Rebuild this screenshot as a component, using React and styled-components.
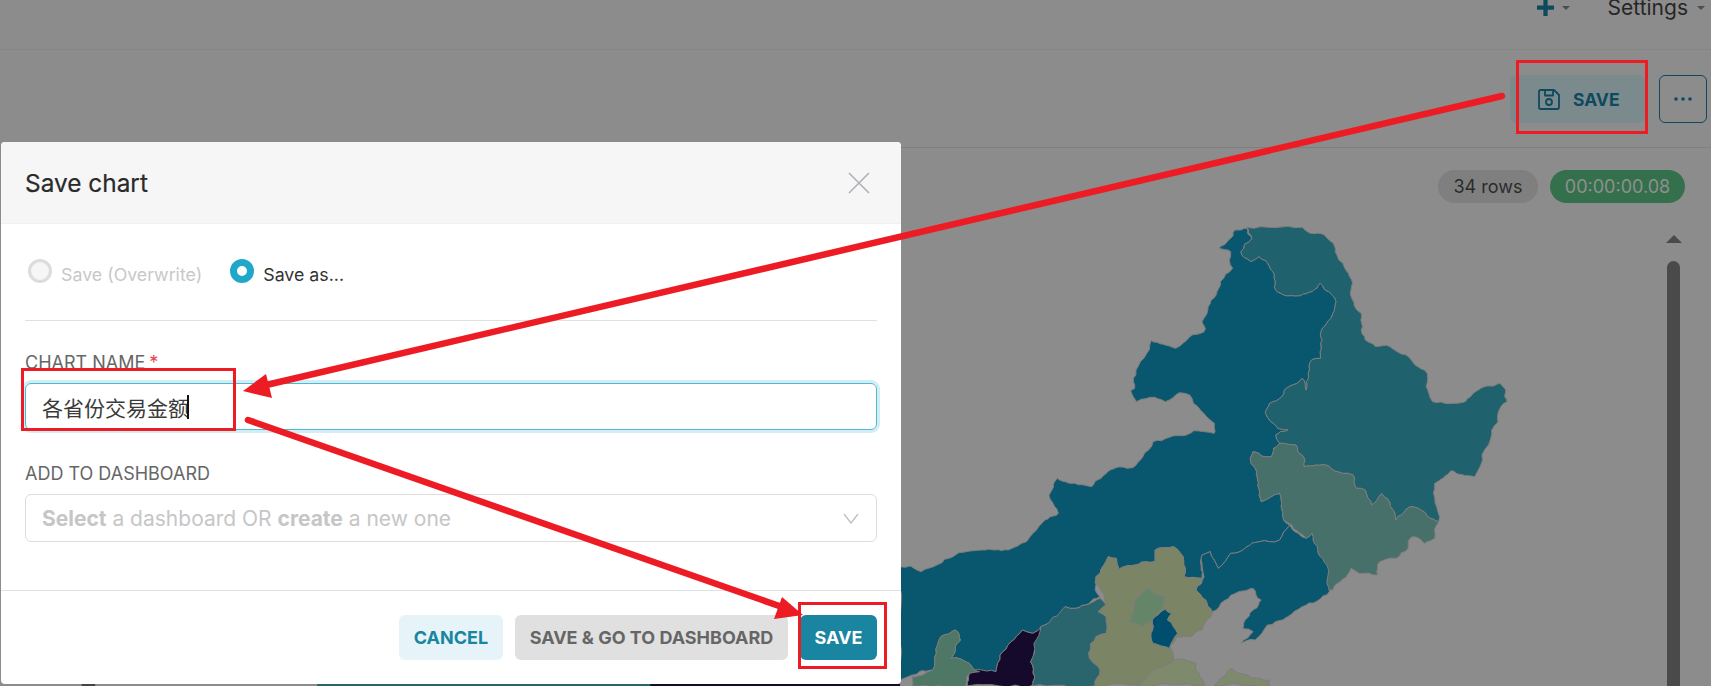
import React from "react";
import styled, { createGlobalStyle } from "styled-components";

const Global = createGlobalStyle`
  html, body { margin: 0; padding: 0; background: #8c8c8c; }
  * { box-sizing: border-box; }
`;

const Page = styled.div`
  position: relative;
  width: 1711px;
  height: 686px;
  overflow: hidden;
  background: #8c8c8c;
  font-family: Inter, "Noto Sans CJK SC", sans-serif;
`;

const TopNav = styled.header`
  height: 50px;
  border-bottom: 1px solid #858585;
  display: flex;
  justify-content: flex-end;
  align-items: flex-start;
  padding-right: 6px;
`;
const NavItem = styled.div`
  display: flex;
  align-items: flex-start;
  margin-left: ${p => p.$gap || 0}px;
  font-size: 21px;
  line-height: 24px;
  margin-top: -4px;
  color: #262626;
`;
const Caret = styled.span`
  width: 0;
  height: 0;
  margin: 10px 0 0 ${p => p.$gap}px;
  border-left: 4px solid transparent;
  border-right: 4px solid transparent;
  border-top: 4px solid #4d4d4d;
`;
const PlusIcon = styled.svg`
  width: 17px;
  height: 17px;
  margin-top: 3px;
`;

const Toolbar = styled.div`
  height: 98px;
  border-bottom: 1px solid #7f7f7f;
  display: flex;
  justify-content: flex-end;
  align-items: flex-start;
  gap: 14px;
  padding: 25px 4px 0 0;
`;
const ToolSave = styled.div`
  width: 135px;
  height: 48px;
  border-radius: 6px;
  background: #7b8b8d;
  color: #0f495e;
  display: flex;
  align-items: center;
  padding-left: 28px;
  gap: 13px;
  font-size: 17.5px;
  font-weight: 700;
`;
const MoreButton = styled.div`
  width: 48px;
  height: 48px;
  border: 1px solid #0f495e;
  border-radius: 6px;
  display: flex;
  align-items: center;
  justify-content: center;
`;

const ChartArea = styled.main`
  height: 538px;
  padding-top: 22px;
`;
const StatusRow = styled.div`
  display: flex;
  justify-content: flex-end;
  gap: 12px;
  padding-right: 26px;
`;
const Pill = styled.div`
  height: 33px;
  width: ${p => p.$w}px;
  border-radius: 17px;
  background: ${p => p.$bg};
  color: ${p => p.$fg};
  font-size: 18px;
  display: flex;
  align-items: center;
  justify-content: center;
`;
const ChartBody = styled.div`
  display: flex;
  align-items: flex-start;
  padding-left: 900px;
  margin-top: -3px;
`;
const MapSvg = styled.svg`
  width: 640px;
  height: 486px;
  flex: none;
  overflow: visible;
`;
const Scrollbar = styled.div`
  margin: 35px 0 0 126px;
  width: 15px;
  display: flex;
  flex-direction: column;
  align-items: center;
`;
const ScrollArrow = styled.span`
  width: 0;
  height: 0;
  border-left: 8px solid transparent;
  border-right: 8px solid transparent;
  border-bottom: 8px solid #4a4a4a;
`;
const ScrollThumb = styled.span`
  width: 13px;
  height: 460px;
  margin-top: 18px;
  border-radius: 7px;
  background: #4a4a4a;
`;

const Modal = styled.section`
  position: absolute;
  left: 1px;
  top: 142px;
  width: 900px;
  height: 542px;
  background: #fff;
  border-radius: 4px;
  display: flex;
  flex-direction: column;
  overflow: hidden;
`;
const ModalHeader = styled.div`
  height: 82px;
  flex: none;
  background: #f6f6f6;
  border-bottom: 1px solid #f0f0f0;
  display: flex;
  align-items: center;
  justify-content: space-between;
  padding: 0 31px 0 24px;
`;
const ModalTitle = styled.h2`
  margin: 0;
  font-size: 24.4px;
  font-weight: 400;
  color: #2a2a2a;
  -webkit-text-stroke: 0.2px #2a2a2a;
`;
const ModalBody = styled.div`
  flex: 1;
  padding: 35px 24px 0;
`;
const RadioRow = styled.div`
  display: flex;
  align-items: center;
  height: 24px;
`;
const RadioCircle = styled.span`
  width: 24px;
  height: 24px;
  border-radius: 50%;
  flex: none;
  margin-left: ${p => p.$left || 0}px;
  background: ${p => (p.$on ? "#fff" : "#f6f6f6")};
  border: ${p => (p.$on ? "7px solid #20a7c9" : "3px solid #dcdcdc")};
`;
const RadioLabel = styled.span`
  margin: 7px ${p => p.$after || 0}px 0 ${p => p.$gap}px;
  font-size: 17.8px;
  color: ${p => (p.$off ? "#c8c8c8" : "#333")};
`;
const Divider = styled.hr`
  margin: 37px 0 0;
  border: 0;
  height: 1px;
  background: #e0e0e0;
`;
const FieldLabel = styled.div`
  margin-top: ${p => p.$top}px;
  height: 20px;
  line-height: 20px;
  font-size: 18px;
  color: #666;
`;
const Required = styled.span`
  margin-left: 4px;
  color: #e04355;
`;
const NameInput = styled.div`
  margin-top: 10px;
  height: 47px;
  border: 1px solid #4fb8d2;
  border-radius: 6px;
  box-shadow: 0 0 0 3px #d2edf4;
  padding-left: 16px;
  display: flex;
  align-items: center;
  font-size: 21px;
  color: #3a3a3a;
  font-family: "Noto Sans CJK SC", sans-serif;
`;
const TextCaret = styled.span`
  width: 2px;
  height: 24px;
  margin-left: -2px;
  background: #111;
`;
const SelectBox = styled.div`
  margin-top: 10px;
  height: 48px;
  border: 1px solid #dcdcdc;
  border-radius: 6px;
  padding: 0 17px 0 16px;
  display: flex;
  align-items: center;
  justify-content: space-between;
  font-size: 21px;
  color: #c6c6c6;
  b { font-weight: 700; }
`;
const ModalFooter = styled.div`
  height: 94px;
  flex: none;
  border-top: 1px solid #e0e0e0;
  padding: 24px 24px 0 0;
  display: flex;
  justify-content: flex-end;
  gap: 12px;
`;
const Button = styled.div`
  width: ${p => p.$w}px;
  height: 45px;
  border-radius: 6px;
  background: ${p => p.$bg};
  color: ${p => p.$fg};
  font-size: 18px;
  font-weight: 700;
  display: flex;
  align-items: center;
  justify-content: center;
`;

const AnnotationBox = styled.div`
  position: absolute;
  left: ${p => p.$x}px;
  top: ${p => p.$y}px;
  width: ${p => p.$w}px;
  height: ${p => p.$h}px;
  border: 3px solid #ed1c24;
`;
const ArrowLayer = styled.svg`
  position: absolute;
  left: 0;
  top: 0;
  width: 1711px;
  height: 686px;
  pointer-events: none;
`;

const regions = [
  { fill: "#1f616c", d: "850,82 985,82 1005,100 1040,105 1065,140 1085,190 1105,270 1130,340 1140,420 1165,440 1200,440 1240,465 1285,510 1305,605 1385,605 1410,575 1470,550 1487,605 1465,640 1450,700 1408,830 1350,812 1310,850 1320,965 1270,925 1250,920 1215,960 1180,880 1155,915 1140,870 1118,865 1110,825 1085,820 1050,798 990,800 970,735 930,730 920,705 950,690 925,685 895,640 905,610 935,590 985,535 995,570 1000,520 1010,478 1030,475 1030,400 1060,340 1068,305 1030,250 1010,275 950,288 920,270 905,200 880,170 860,185 835,155 862,115" },
  { fill: "#09566f", d: "850,85 820,90 782,145 810,155 815,205 785,245 755,320 740,365 745,395 710,410 675,445 615,422 578,525 575,565 565,572 580,605 625,592 650,605 685,578 710,585 770,670 770,700 720,692 660,712 620,725 595,770 570,803 515,810 470,860 415,850 385,835 365,885 388,940 340,980 310,1025 265,1050 200,1050 130,1070 52,1115 25,1098 0,1100 0,1440 20,1430 80,1410 100,1310 135,1290 148,1320 125,1375 170,1390 195,1415 235,1415 245,1365 300,1290 325,1300 345,1280 360,1272 385,1270 405,1220 430,1225 490,1190 480,1130 510,1070 530,1075 535,1110 600,1085 625,1085 625,1050 670,1040 695,1080 695,1130 740,1135 740,1065 760,1055 780,1105 810,1060 850,1040 880,1025 930,1020 955,975 940,960 930,880 885,905 875,830 858,775 865,755 890,770 910,770 915,745 930,730 920,705 950,690 925,685 895,640 905,610 935,590 985,535 995,570 1000,520 1010,478 1030,475 1030,400 1060,340 1068,305 1030,250 1010,275 950,288 920,270 905,200 880,170 860,185 835,155 862,115" },
  { fill: "#47706a", d: "858,775 865,755 890,770 910,770 930,730 970,735 990,800 1050,798 1085,820 1110,825 1118,865 1140,870 1155,915 1180,880 1215,960 1250,920 1270,925 1320,965 1310,1015 1285,1030 1255,1010 1245,1045 1215,1075 1175,1085 1170,1125 1125,1120 1105,1105 1060,1170 1050,1170 1035,1075 1010,1000 995,1015 960,975 940,960 930,880 885,905 875,830" },
  { fill: "#09566f", d: "955,975 995,1015 1010,1000 1035,1075 1052,1175 985,1220 950,1250 900,1275 870,1320 835,1330 865,1295 840,1285 850,1255 885,1200 865,1165 830,1175 765,1235 725,1170 745,1130 740,1065 760,1055 780,1105 810,1060 850,1040 880,1025 930,1020" },
  { fill: "#7b8464", d: "510,1070 530,1075 535,1110 600,1085 625,1085 625,1050 670,1040 695,1080 695,1130 740,1135 725,1170 765,1235 740,1290 710,1310 680,1310 660,1340 670,1380 620,1410 585,1458 478,1458 490,1410 462,1360 480,1310 505,1300 505,1250 485,1235 505,1215 480,1130" },
  { fill: "#648567", d: "610,1165 650,1190 630,1240 620,1260 595,1280 560,1265 575,1205" },
  { fill: "#004e6d", d: "650,1228 665,1240 655,1260 680,1300 660,1345 620,1330 625,1250" },
  { fill: "#15092c", d: "345,1280 350,1300 320,1385 330,1430 322,1458 165,1458 170,1420 190,1408 235,1415 245,1365 300,1290 325,1300" },
  { fill: "#4f7766", d: "100,1310 135,1290 148,1320 125,1375 170,1390 195,1415 170,1420 160,1458 30,1458 30,1430 80,1410" },
  { fill: "#2a656e", d: "360,1272 405,1220 430,1225 490,1195 505,1215 485,1235 505,1250 505,1300 480,1310 462,1360 490,1410 478,1458 322,1458 330,1430 320,1385 345,1280" },
  { fill: "#7f8a6c", d: "620,1410 670,1380 725,1390 735,1430 745,1458 585,1458" },
  { fill: "#7f8a6c", d: "770,1458 810,1405 880,1435 905,1440 905,1458" },
];

// Roughens coastline/border edges: the offset depends only on the edge's two ends,
// so a border shared by two regions stays shared.
const hash = (a, b) => {
  const s = [a.join(), b.join()].sort().join("|");
  let h = 7;
  for (let i = 0; i < s.length; i++) h = (h * 31 + s.charCodeAt(i)) % 9973;
  return h / 9973 - 0.5;
};
const roughEdge = (a, b, depth) => {
  const len = Math.hypot(b[0] - a[0], b[1] - a[1]);
  if (depth === 0 || len < 14) return [];
  const off = hash(a, b) * Math.min(len * 0.28, 13);
  const m = [
    Math.round((a[0] + b[0]) / 2 - ((b[1] - a[1]) / len) * off * Math.sign(b[0] - a[0] || 1)),
    Math.round((a[1] + b[1]) / 2 + ((b[0] - a[0]) / len) * off * Math.sign(b[0] - a[0] || 1)),
  ];
  return [...roughEdge(a, m, depth - 1), m, ...roughEdge(m, b, depth - 1)];
};
const roughen = d => {
  const pts = d.split(" ").map(p => p.split(",").map(Number));
  const out = [];
  pts.forEach((p, i) => {
    out.push(p, ...roughEdge(p, pts[(i + 1) % pts.length], 3));
  });
  return out.map(p => p.join(",")).join(" ");
};

const ChinaMap = () => (
  <MapSvg viewBox="0 0 1568 1458" preserveAspectRatio="none">
    <rect x="-2005" y="1452" width="33" height="6" fill="#444" />
    <rect x="-1428" y="1452" width="816" height="6" fill="#2a656e" />
    <rect x="-612" y="1452" width="612" height="6" fill="#15092c" />
    {regions.map((r, i) => (
      <polygon key={i} points={roughen(r.d)} fill={r.fill} stroke="#7d7d7d" strokeWidth="1" vectorEffect="non-scaling-stroke" strokeLinejoin="round" />
    ))}
  </MapSvg>
);

const FloppyIcon = () => (
  <svg width="22" height="21" viewBox="0 0 22 21" fill="none" stroke="#0f495e" strokeWidth="1.8" strokeLinejoin="round">
    <path d="M2.5 1H16l5 5v12.5a1.5 1.5 0 0 1-1.5 1.5h-17A1.5 1.5 0 0 1 1 18.5v-16A1.5 1.5 0 0 1 2.5 1z" />
    <path d="M7 1v5.5h8V1" />
    <circle cx="11" cy="13" r="3" />
  </svg>
);

export default function App() {
  return (
    <Page>
      <Global />
      <TopNav>
        <NavItem>
          <PlusIcon viewBox="0 0 16 16"><path d="M6 0h4v6h6v4h-6v6H6v-6H0V6h6z" fill="#0f495e" /></PlusIcon>
          <Caret $gap={8} />
        </NavItem>
        <NavItem $gap={38}>
          Settings
          <Caret $gap={9} />
        </NavItem>
      </TopNav>
      <Toolbar>
        <ToolSave><FloppyIcon />SAVE</ToolSave>
        <MoreButton>
          <svg width="18" height="4" viewBox="0 0 18 4" fill="#0f495e">
            <circle cx="2" cy="2" r="1.8" /><circle cx="9" cy="2" r="1.8" /><circle cx="16" cy="2" r="1.8" />
          </svg>
        </MoreButton>
      </Toolbar>
      <ChartArea>
        <StatusRow>
          <Pill $w={100} $bg="#7f7f7f" $fg="#2b2b2b">34 rows</Pill>
          <Pill $w={135} $bg="#35704d" $fg="#8f8f8f">00:00:00.08</Pill>
        </StatusRow>
        <ChartBody>
          <ChinaMap />
          <Scrollbar>
            <ScrollArrow />
            <ScrollThumb />
          </Scrollbar>
        </ChartBody>
      </ChartArea>

      <Modal>
        <ModalHeader>
          <ModalTitle>Save chart</ModalTitle>
          <svg width="22" height="22" viewBox="0 0 22 22" stroke="#b0b0bc" strokeWidth="1.6">
            <path d="M1 1l20 20M21 1L1 21" />
          </svg>
        </ModalHeader>
        <ModalBody>
          <RadioRow>
            <RadioCircle $left={3} />
            <RadioLabel $off $gap={9} $after={28}>Save (Overwrite)</RadioLabel>
            <RadioCircle $on />
            <RadioLabel $gap={9}>Save as...</RadioLabel>
          </RadioRow>
          <Divider />
          <FieldLabel $top={32}>CHART NAME<Required>*</Required></FieldLabel>
          <NameInput>各省份交易金额<TextCaret /></NameInput>
          <FieldLabel $top={34}>ADD TO DASHBOARD</FieldLabel>
          <SelectBox>
            <span><b>Select</b> a dashboard OR <b>create</b> a new one</span>
            <svg width="16" height="11" viewBox="0 0 16 11" fill="none" stroke="#c2c2c2" strokeWidth="1.4"><path d="M1 1l7 9 7-9" /></svg>
          </SelectBox>
        </ModalBody>
        <ModalFooter>
          <Button $w={104} $bg="#e6f4f9" $fg="#1a85a0">CANCEL</Button>
          <Button $w={273} $bg="#e0e0e0" $fg="#666">SAVE &amp; GO TO DASHBOARD</Button>
          <Button $w={77} $bg="#1a85a0" $fg="#fff">SAVE</Button>
        </ModalFooter>
      </Modal>

      <AnnotationBox $x={1516} $y={60} $w={132} $h={74} />
      <AnnotationBox $x={21} $y={368} $w={215} $h={63} />
      <AnnotationBox $x={798} $y={602} $w={89} $h={67} />
      <ArrowLayer viewBox="0 0 1711 686">
        <path d="M1502 96L262 386" stroke="#ed1c24" strokeWidth="6.5" strokeLinecap="round" fill="none" />
        <polygon points="243,391 266,374 272,398" fill="#ed1c24" />
        <path d="M248 420L785 608" stroke="#ed1c24" strokeWidth="6.5" strokeLinecap="round" fill="none" />
        <polygon points="803,615 782,597 774,619" fill="#ed1c24" />
      </ArrowLayer>
    </Page>
  );
}
